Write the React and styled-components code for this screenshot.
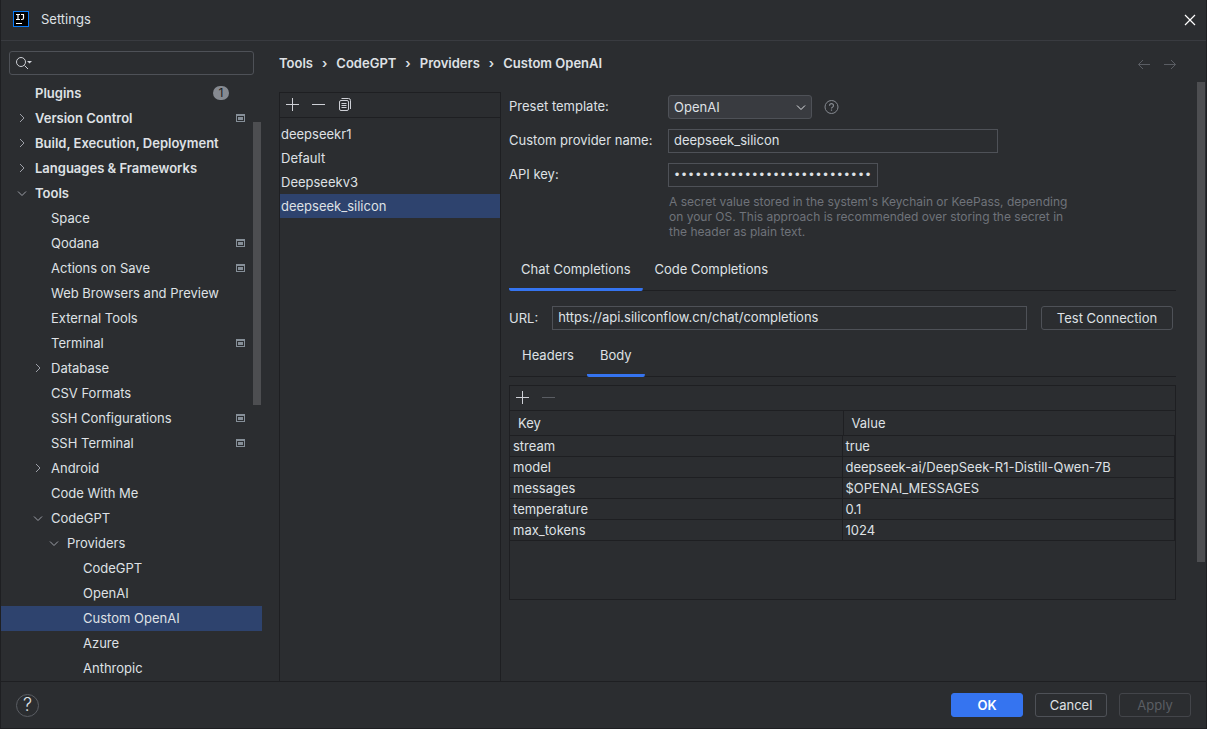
import styled, { createGlobalStyle } from 'styled-components'
import { useEffect, useRef, useState } from 'react';

const GlobalStyle = createGlobalStyle`
  * {
    box-sizing: border-box;
  }
  body {
    margin: 0;
    background: #2b2d30;
    color: #dfe1e5;
    font-family: Inter, "Liberation Sans", sans-serif;
    font-size: 13px;
    line-height: 16px;
  }
  button, input, select {
    font: inherit;
    color: inherit;
  }
`;

const Window = styled.div`
  display: flex;
  flex-direction: column;
  height: 100vh;
  border: 1px solid #1e1f22;
  border-top: 0;
`;

const TitleBar = styled.header`
  display: flex;
  align-items: center;
  gap: 12px;
  height: 41px;
  flex: none;
  padding: 0 10px 2px 12px;
  border-bottom: 1px solid #393b40;
`;

const Title = styled.h1`
  flex: 1;
  margin: 0;
  font-size: 13px;
  font-weight: 400;
`;

const IconButton = styled.button`
  display: flex;
  padding: 0;
  border: 0;
  background: transparent;
  color: ${props => props.$color || '#ced0d6'};
`;

const CloseButton = styled(IconButton)`
  padding-top: 2px;
`;

const Columns = styled.div`
  display: flex;
  flex: 1;
  min-height: 0;
`;

const Sidebar = styled.nav`
  position: relative;
  display: flex;
  flex-direction: column;
  width: 261px;
  flex: none;
  padding-top: 10px;
`;

const Search = styled.label`
  display: flex;
  align-items: center;
  gap: 4px;
  height: 24px;
  flex: none;
  margin: 0 8px 6px;
  padding: 0 5px;
  border: 1px solid #4e5157;
  border-radius: 3px;
`;

const SearchInput = styled.input`
  flex: 1;
  min-width: 0;
  padding: 0;
  border: 0;
  outline: 0;
  background: transparent;
`;

const Tree = styled.ul`
  flex: 1;
  min-height: 0;
  margin: 0;
  padding: 0;
  list-style: none;
  overflow: hidden;
`;

const TreeRow = styled.li`
  display: flex;
  align-items: center;
  height: 25px;
  padding-left: ${props => 12 + props.$level * 16}px;
  padding-right: 17px;
  padding-bottom: 2px;
  font-weight: ${props => props.$level === 0 ? 600 : 400};
  background: ${props => props.$selected ? '#2e436e' : 'transparent'};
`;

const Arrow = styled.span`
  display: flex;
  width: 22px;
  color: #9da0a8;
`;

const TreeLink = styled.a`
  flex: 1;
  white-space: nowrap;
  color: inherit;
  text-decoration: none;
`;

const Badge = styled.span`
  width: 16px;
  height: 14px;
  margin-right: 16px;
  border-radius: 7px;
  background: #868a91;
  color: #1e1f22;
  font-size: 12px;
  font-weight: 400;
  line-height: 14px;
  text-align: center;
`;

const SidebarThumb = styled.div`
  position: absolute;
  top: 81px;
  right: 1px;
  width: 8px;
  height: 283px;
  background: #4d4e51;
`;

const Main = styled.main`
  display: flex;
  flex-direction: column;
  flex: 1;
  min-width: 0;
  padding-left: 17px;
`;

const TopLine = styled.div`
  display: flex;
  align-items: center;
  height: 41px;
  flex: none;
  padding: 4px 28px 0 0;
`;

const Crumbs = styled.ol`
  display: flex;
  flex: 1;
  gap: 9px;
  margin: 0;
  padding: 0 0 2px;
  list-style: none;
  font-weight: 600;
`;

const History = styled.div`
  display: flex;
  gap: 10px;
`;

const Page = styled.div`
  display: flex;
  flex: 1;
  min-height: 0;
`;

const ProviderPanel = styled.section`
  width: 222px;
  flex: none;
  margin-top: 10px;
  border: 1px solid #1e1f22;
  border-bottom: 0;
`;

const Toolbar = styled.div`
  display: flex;
  align-items: center;
  gap: 10px;
  height: 25px;
  padding: 0 5px;
  border-bottom: 1px solid #1e1f22;
`;

const ProviderList = styled.ul`
  margin: 0;
  padding: 4px 0;
  list-style: none;
`;

const Provider = styled.li`
  padding: 4px 1px;
  background: ${props => props.$selected ? '#2e436e' : 'transparent'};
`;

const Details = styled.section`
  flex: 1;
  min-width: 0;
  padding: 13px 21px 0 8px;
`;

const PageScroll = styled.div`
  width: 9px;
  flex: none;
`;

const PageThumb = styled.div`
  width: 8px;
  height: 480px;
  background: #4d4e51;
`;

const Form = styled.div`
  display: grid;
  grid-template-columns: 145px 1fr;
  gap: 10px 14px;
`;

const Label = styled.label`
  padding-top: 3px;
  white-space: nowrap;
`;

const Line = styled.div`
  display: flex;
  align-items: center;
  gap: 12px;
`;

const SelectBox = styled.span`
  display: grid;
  align-items: center;
  width: 144px;

  > * {
    grid-area: 1 / 1;
  }
  > svg {
    justify-self: end;
    margin-right: 4px;
    pointer-events: none;
  }
`;

const Select = styled.select`
  appearance: none;
  width: 100%;
  height: 24px;
  padding: 0 5px;
  border: 1px solid #4e5157;
  border-radius: 3px;
  background: #393b40;
`;

const TextInput = styled.input`
  width: ${props => props.$width || 'auto'};
  flex: ${props => props.$width ? 'none' : 1};
  min-width: 0;
  height: 24px;
  padding: 0 5px 2px;
  border: 1px solid #4e5157;
  outline: 0;
  background: transparent;
`;

const PasswordInput = styled(TextInput)`
  padding-bottom: 0;
  font-family: "DejaVu Sans", sans-serif;
  font-size: 12px;
`;

const Hint = styled.p`
  width: 410px;
  margin: -3px 0 0 1px;
  color: #6f737a;
  font-size: 12px;
  line-height: 15px;
`;

const Tabs = styled.div`
  display: flex;
  height: 40px;
  border-bottom: 1px solid #1e1f22;
`;

const Tab = styled.button`
  margin-bottom: -1px;
  padding: 0 ${props => props.$small ? 13 : 12}px 5px;
  border: 0;
  background: linear-gradient(#3574f0, #3574f0) no-repeat bottom / 100% ${props => props.$active ? 3 : 0}px;
  border-radius: 2px;
`;

const CompletionTabs = styled(Tabs)`
  margin-top: 12px;
`;

const UrlLine = styled.div`
  display: flex;
  align-items: center;
  gap: 14px;
  margin: 15px 3px 7px 0;
`;

const Button = styled.button`
  min-width: ${props => props.$wide ? 132 : 72}px;
  height: 24px;
  padding: 0 12px;
  border: 1px solid ${props => props.$primary ? '#3574f0' : '#4e5157'};
  border-radius: 3px;
  background: ${props => props.$primary ? '#3574f0' : 'transparent'};
  color: ${props => props.$primary ? '#ffffff' : '#dfe1e5'};
  font-weight: ${props => props.$primary ? 600 : 400};

  &:disabled {
    border-color: #43454a;
    color: #5a5d63;
  }
`;

const TablePanel = styled.div`
  min-height: 215px;
  margin-top: 8px;
  border: 1px solid #1e1f22;
`;

const Table = styled.table`
  width: 100%;
  border-collapse: separate;
  border-spacing: 0;
  table-layout: fixed;

  th {
    height: 25px;
    padding: 0 8px;
    border-bottom: 1px solid #1e1f22;
    font-weight: 400;
    text-align: left;
  }
  th + th {
    border-left: 1px solid #1e1f22;
  }
  td {
    height: 21px;
    padding: 0 3px;
    border-right: 1px solid #1e1f22;
    border-bottom: 1px solid #1e1f22;
  }
`;

const Footer = styled.footer`
  display: flex;
  align-items: center;
  gap: 12px;
  height: 47px;
  flex: none;
  padding: 0 15px;
  border-top: 1px solid #1e1f22;
`;

const HelpButton = styled.button`
  width: 23px;
  height: 23px;
  margin-right: auto;
  padding: 0;
  border: 1px solid #5a5d63;
  border-radius: 50%;
  background: transparent;
  font-size: 18px;
  font-weight: 300;
  line-height: 20px;
`;

const Icon = ({ size = 16, children }) => (
  <svg width={size} height={size} viewBox={`0 0 ${size} ${size}`} fill="none" stroke="currentColor" aria-hidden="true">
    {children}
  </svg>
)

const Logo = () => (
  <svg width="16" height="16" viewBox="0 0 16 16" aria-hidden="true">
    <rect width="16" height="16" fill="#087cfa" />
    <rect x="1" y="1" width="14" height="14" fill="#000" />
    <g fill="none" stroke="#fff">
      <path d="M3 3.500h4M5 3.500v5M3 8.500h4M8 3.500h3M10.500 3.500v3.500q0 1.500-1.500 1.500h-1" strokeWidth="1.200" />
      <path d="M3 12.500h6" />
    </g>
  </svg>
)

const Plus = () => <Icon><path d="M7.500 1v13M1 7.500h13" /></Icon>
const Minus = () => <Icon><path d="M1 7.500h13" /></Icon>
const Copy = () => (
  <Icon>
    <rect x="2.500" y="3.500" width="9" height="10" rx="1.500" />
    <path d="M4.500 1.500h7a2 2 0 0 1 2 2V12M4.500 6.500h5M4.500 8.500h5M4.500 10.500h5" />
  </Icon>
)
const ChevronRight = () => <Icon><path d="M7 4l4 4-4 4" /></Icon>
const ChevronDown = () => <Icon><path d="M5 6.500l4 4 4-4" /></Icon>
const ProjectIcon = () => (
  <svg width="9" height="8" viewBox="0 0 9 8" aria-hidden="true">
    <path d="M0 0h9v8H0zM1 2v5h7V2z" fill="#868f98" fillRule="evenodd" />
    <path d="M2 3h5v3H2z" fill="#868f98" />
  </svg>
)

const tree = [
  { name: 'Plugins', level: 0, badge: 1 },
  { name: 'Version Control', level: 0, arrow: 'right', project: true },
  { name: 'Build, Execution, Deployment', level: 0, arrow: 'right' },
  { name: 'Languages & Frameworks', level: 0, arrow: 'right' },
  { name: 'Tools', level: 0, arrow: 'down' },
  { name: 'Space', level: 1 },
  { name: 'Qodana', level: 1, project: true },
  { name: 'Actions on Save', level: 1, project: true },
  { name: 'Web Browsers and Preview', level: 1 },
  { name: 'External Tools', level: 1 },
  { name: 'Terminal', level: 1, project: true },
  { name: 'Database', level: 1, arrow: 'right' },
  { name: 'CSV Formats', level: 1 },
  { name: 'SSH Configurations', level: 1, project: true },
  { name: 'SSH Terminal', level: 1, project: true },
  { name: 'Android', level: 1, arrow: 'right' },
  { name: 'Code With Me', level: 1 },
  { name: 'CodeGPT', level: 1, arrow: 'down' },
  { name: 'Providers', level: 2, arrow: 'down' },
  { name: 'CodeGPT', level: 3 },
  { name: 'OpenAI', level: 3 },
  { name: 'Custom OpenAI', level: 3 },
  { name: 'Azure', level: 3 },
  { name: 'Anthropic', level: 3 },
]

const providers = ['deepseekr1', 'Default', 'Deepseekv3', 'deepseek_silicon']

const bodyParams = [
  ['stream', 'true'],
  ['model', 'deepseek-ai/DeepSeek-R1-Distill-Qwen-7B'],
  ['messages', '$OPENAI_MESSAGES'],
  ['temperature', '0.1'],
  ['max_tokens', '1024'],
]

const crumbs = ['Tools', 'CodeGPT', 'Providers', 'Custom OpenAI']

function SettingsTree() {
  return (
    <Sidebar aria-label="Settings">
      <Search>
        <svg width="18" height="14" viewBox="0 0 18 14" fill="none" stroke="#ced0d6" aria-hidden="true">
          <circle cx="6" cy="6" r="4.500" />
          <path d="M9.500 9.500l3.500 3.500" />
          <path d="M12 5h5l-2.500 2.500z" fill="#ced0d6" stroke="none" />
        </svg>
        <SearchInput type="search" aria-label="Search settings" />
      </Search>
      <Tree>
        {tree.map((item, i) => (
          <TreeRow key={i} $level={item.level} $selected={item.name === 'Custom OpenAI'}>
            <Arrow>
              {item.arrow === 'right' && <ChevronRight />}
              {item.arrow === 'down' && <ChevronDown />}
            </Arrow>
            <TreeLink href="#">{item.name}</TreeLink>
            {item.badge && <Badge>{item.badge}</Badge>}
            {item.project && <ProjectIcon />}
          </TreeRow>
        ))}
      </Tree>
      <SidebarThumb />
    </Sidebar>
  )
}

function ProviderForm() {
  const [name, setName] = useState('deepseek_silicon')
  const [apiKey, setApiKey] = useState('sk-0000000000000000000000000000000000000000000')
  const keyRef = useRef(null)

  // keep the end of the key in view
  useEffect(() => {
    keyRef.current.scrollLeft = keyRef.current.scrollWidth
  }, [apiKey])

  return (
    <Form>
      <Label htmlFor="preset">Preset template:</Label>
      <Line>
        <SelectBox>
          <Select id="preset" defaultValue="OpenAI">
            <option>OpenAI</option>
          </Select>
          <ChevronDown />
        </SelectBox>
        <IconButton aria-label="About templates" $color="#868a91">
          <Icon>
            <circle cx="7.500" cy="8" r="6.500" />
            <path d="M5.500 6.700a2 2 0 1 1 3 1.600q-1 .5-1 1.200M7.500 10.500v1.200" strokeWidth="1.200" />
          </Icon>
        </IconButton>
      </Line>
      <Label htmlFor="name">Custom provider name:</Label>
      <TextInput id="name" $width="330px" value={name} onChange={e => setName(e.target.value)} />
      <Label htmlFor="key">API key:</Label>
      <Line>
        <PasswordInput id="key" type="password" ref={keyRef} $width="210px" value={apiKey} onChange={e => setApiKey(e.target.value)} />
      </Line>
      <span />
      <Hint>
        A secret value stored in the system's Keychain or KeePass, depending on your OS. This approach is recommended over storing the secret in the header as plain text.
      </Hint>
    </Form>
  )
}

function App() {
  const [url, setUrl] = useState('https://api.siliconflow.cn/chat/completions')

  return (
    <Window>
      <GlobalStyle />
      <TitleBar>
        <Logo />
        <Title>Settings</Title>
        <CloseButton aria-label="Close" $color="#ffffff">
          <Icon size={12}><path d="M1 1l10 10M11 1L1 11" strokeWidth="1.200" /></Icon>
        </CloseButton>
      </TitleBar>
      <Columns>
        <SettingsTree />
        <Main>
          <TopLine>
            <Crumbs>
              {crumbs.map((crumb, i) => [
                i > 0 && <li key={crumb + '-sep'} aria-hidden="true">›</li>,
                <li key={crumb}>{crumb}</li>,
              ])}
            </Crumbs>
            <History>
              <IconButton aria-label="Back" $color="#5a5d63">
                <Icon><path d="M14 8.500H2.500M7 4L2.500 8.500 7 13" /></Icon>
              </IconButton>
              <IconButton aria-label="Forward" $color="#5a5d63">
                <Icon><path d="M2 8.500h11.500M9 4l4.500 4.500L9 13" /></Icon>
              </IconButton>
            </History>
          </TopLine>
          <Page>
            <ProviderPanel>
              <Toolbar>
                <IconButton aria-label="Add provider"><Plus /></IconButton>
                <IconButton aria-label="Remove provider"><Minus /></IconButton>
                <IconButton aria-label="Copy provider"><Copy /></IconButton>
              </Toolbar>
              <ProviderList>
                {providers.map(p => <Provider key={p} $selected={p === 'deepseek_silicon'}>{p}</Provider>)}
              </ProviderList>
            </ProviderPanel>
            <Details>
              <ProviderForm />
              <CompletionTabs role="tablist">
                <Tab role="tab" aria-selected="true" $active>Chat Completions</Tab>
                <Tab role="tab" aria-selected="false">Code Completions</Tab>
              </CompletionTabs>
              <UrlLine>
                <label htmlFor="url">URL:</label>
                <TextInput id="url" value={url} onChange={e => setUrl(e.target.value)} />
                <Button $wide>Test Connection</Button>
              </UrlLine>
              <Tabs role="tablist">
                <Tab role="tab" aria-selected="false" $small>Headers</Tab>
                <Tab role="tab" aria-selected="true" $small $active>Body</Tab>
              </Tabs>
              <TablePanel>
                <Toolbar>
                  <IconButton aria-label="Add row"><Plus /></IconButton>
                  <IconButton aria-label="Remove row" disabled $color="#5a5d63"><Minus /></IconButton>
                </Toolbar>
                <Table>
                  <thead>
                    <tr><th>Key</th><th>Value</th></tr>
                  </thead>
                  <tbody>
                    {bodyParams.map(([key, value]) => (
                      <tr key={key}><td>{key}</td><td>{value}</td></tr>
                    ))}
                  </tbody>
                </Table>
              </TablePanel>
            </Details>
            <PageScroll><PageThumb /></PageScroll>
          </Page>
        </Main>
      </Columns>
      <Footer>
        <HelpButton aria-label="Help">?</HelpButton>
        <Button $primary>OK</Button>
        <Button>Cancel</Button>
        <Button disabled>Apply</Button>
      </Footer>
    </Window>
  );
}

export default App;
